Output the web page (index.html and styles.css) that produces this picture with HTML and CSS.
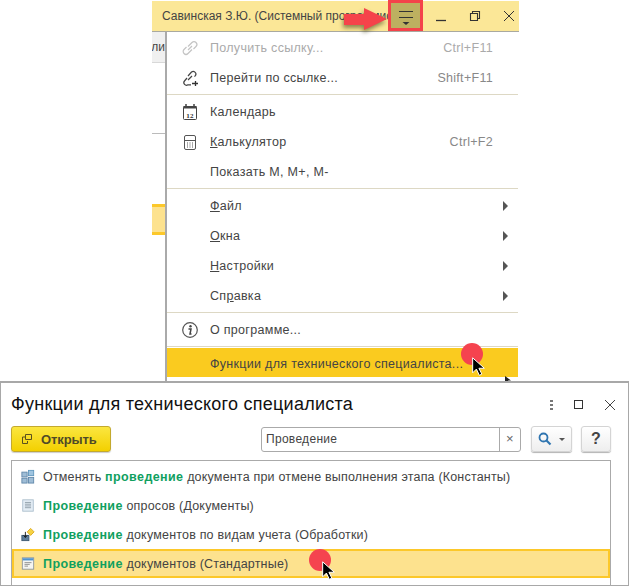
FILE: index.html
```html
<!DOCTYPE html>
<html lang="ru">
<head>
<meta charset="utf-8">
<title>Функции для технического специалиста</title>
<link rel="stylesheet" href="styles.css">
</head>
<body>
<div class="page">
  <section class="top">
    <div class="win">
      <header class="titlebar">
        <span class="user">Савинская З.Ю. (Системный программист)</span>
        <button class="menu-btn" aria-label="Меню">
          <svg width="28" height="24" viewBox="0 0 28 24"><path d="M7 7.500h14M7 13.500h14" stroke="#333" stroke-width="1.100" fill="none"/><path d="M10.500 18h7L14 21z" fill="#333"/></svg>
        </button>
        <span class="wbtn"><svg width="12" height="12" viewBox="0 0 12 12"><path d="M1 10.500h10" stroke="#333" stroke-width="1.300"/></svg></span>
        <span class="wbtn"><svg width="12" height="12" viewBox="0 0 12 12"><path d="M1.500 3.500h7v7h-7zM3.500 3.500v-2h7v7h-2" stroke="#333" stroke-width="1.100" fill="none"/></svg></span>
        <span class="wbtn"><svg width="12" height="12" viewBox="0 0 12 12"><path d="M1 1l10 10M11 1L1 11" stroke="#333" stroke-width="1"/></svg></span>
      </header>
      <div class="under">
        <div class="sl-tab"><span>али</span></div>
        <div class="sl-blank"></div>
        <div class="sl-yellow"></div>
      </div>
      <nav class="menu">
        <div class="mi disabled">
          <svg class="ic" width="18" height="18" viewBox="0 0 18 18"><path d="M7 7.500L11 3.500a2.800 2.800 0 0 1 4 4l-2.500 2.500M11 10.500l-4 4a2.800 2.800 0 0 1-4-4l2.500-2.500M7 11l4-4" stroke="#c4c4c4" stroke-width="1.200" fill="none"/></svg>
          <span class="lbl">Получить ссылку...</span><span class="key">Ctrl+F11</span>
        </div>
        <div class="mi">
          <svg class="ic" width="18" height="18" viewBox="0 0 18 18"><path d="M7 7L10.500 3a2.700 2.700 0 0 1 4 3.500l-1 1.200M6 9l-2.500 3a2.600 2.600 0 0 0 3.500 3.800h3M7 11l4-4" stroke="#444" stroke-width="1.200" fill="none"/><path d="M11 14.500h6M14.500 12v5" stroke="#333" stroke-width="1.300"/></svg>
          <span class="lbl">Перейти по ссылке...</span><span class="key">Shift+F11</span>
        </div>
        <div class="sep"></div>
        <div class="mi">
          <svg class="ic" width="18" height="18" viewBox="0 0 18 18"><rect x="2.500" y="3.500" width="13" height="13" rx="1" fill="#fff" stroke="#444"/><path d="M2.500 3h13v2.500h-13z" fill="#444"/><path d="M5 1v3M13 1v3" stroke="#444" stroke-width="1.500"/><text x="9" y="14.500" class="cal">12</text></svg>
          <span class="lbl">Календарь</span>
        </div>
        <div class="mi">
          <svg class="ic" width="18" height="18" viewBox="0 0 18 18"><rect x="3.500" y="2.500" width="11" height="14" rx="1.500" fill="#fff" stroke="#555"/><path d="M3.500 7.500h11" stroke="#555"/><path d="M6 10h1M8.500 10h1M11 10h1M6 12h1M8.500 12h1M11 12h1M6 14h1M8.500 14h1M11 14h1" stroke="#555"/></svg>
          <span class="lbl"><u>К</u>алькулятор</span><span class="key">Ctrl+F2</span>
        </div>
        <div class="mi"><span class="ic"></span><span class="lbl">Показать M, M+, M-</span></div>
        <div class="sep"></div>
        <div class="mi sub"><span class="ic"></span><span class="lbl"><u>Ф</u>айл</span><i class="tri"></i></div>
        <div class="mi sub"><span class="ic"></span><span class="lbl"><u>О</u>кна</span><i class="tri"></i></div>
        <div class="mi sub"><span class="ic"></span><span class="lbl"><u>Н</u>астройки</span><i class="tri"></i></div>
        <div class="mi sub"><span class="ic"></span><span class="lbl">Сп<u>р</u>авка</span><i class="tri"></i></div>
        <div class="sep"></div>
        <div class="mi">
          <svg class="ic" width="18" height="18" viewBox="0 0 18 18"><circle cx="9" cy="9" r="7.300" fill="#fff" stroke="#555" stroke-width="1.200"/><circle cx="9.500" cy="5.300" r="1.200" fill="#444"/><path d="M7.500 8h2.500l-1 5h1.500" stroke="#444" stroke-width="1.500" fill="none"/></svg>
          <span class="lbl">О программе...</span>
        </div>
        <div class="sep"></div>
        <div class="mi active"><span class="ic"></span><span class="lbl">Функции для технического специалиста...</span></div>
      </nav>
    </div>
    <svg class="arrow" width="46" height="26" viewBox="0 0 46 26"><path d="M0 6h20V0l23 11-23 11v-5H0z" fill="#f5434a"/></svg>
    <span class="dot dot-a"></span>
    <svg class="cursor cur-a" width="15" height="20" viewBox="0 0 18 24"><path d="M2 1v18l4.500-4.500 3.500 7.500 3-1.500-3.500-7H16z" fill="#000" stroke="#fff" stroke-width="1.200"/></svg>
    <svg class="cursor cur-small" width="9" height="8" viewBox="0 0 9 8"><path d="M1 0v7l2-2 2 3 1-1-2-2.500h3z" fill="#222"/></svg>
  </section>

  <section class="dialog">
    <header class="dlg-head">
      <h1>Функции для технического специалиста</h1>
      <div class="dlg-ctl">
        <span class="dots"><i></i><i></i><i></i></span>
        <span class="sq"></span>
        <svg width="12" height="12" viewBox="0 0 12 12"><path d="M1 1l10 10M11 1L1 11" stroke="#444" stroke-width="1"/></svg>
      </div>
    </header>
    <div class="toolbar">
      <button class="open">
        <svg width="10" height="10" viewBox="0 0 10 10"><path d="M3.500 .5h6v5h-6zM3 3H.5v6.500h5V7" stroke="#5a5020" fill="none"/></svg>
        <span>Открыть</span>
      </button>
      <div class="search">
        <span class="val">Проведение</span>
        <span class="clr">×</span>
      </div>
      <button class="tbtn find">
        <svg width="14" height="14" viewBox="0 0 14 14"><circle cx="5.500" cy="5.500" r="4" fill="none" stroke="#2f75b0" stroke-width="1.800"/><path d="M8.500 8.500l4 4" stroke="#2f75b0" stroke-width="2.200"/></svg>
        <i class="caret"></i>
      </button>
      <button class="tbtn help">?</button>
    </div>
    <div class="list">
      <div class="row">
        <svg width="14" height="15" viewBox="0 0 16 16"><rect x="1" y="3" width="6" height="5.500" fill="#9fbdd6" stroke="#5f86a8"/><rect x="8.500" y="1" width="6" height="6" fill="#9fc4e0" stroke="#5f97bd"/><rect x="1" y="10" width="6" height="5.500" fill="#9fbdd6" stroke="#5f86a8"/><rect x="8.500" y="9" width="6" height="6.500" fill="#9fbdd6" stroke="#5f86a8"/></svg>
        <span>Отменять <b>проведение</b> документа при отмене выполнения этапа (Константы)</span>
      </div>
      <div class="row">
        <svg width="14" height="15" viewBox="0 0 16 16"><rect x="2" y="1.500" width="12" height="13" fill="#e4edf5" stroke="#a9bccb"/><path d="M4.500 4.500h7M4.500 6.500h7M4.500 8.500h7M4.500 10.500h7" stroke="#8d9aa6"/></svg>
        <span><b>Проведение</b> опросов (Документы)</span>
      </div>
      <div class="row">
        <svg width="14" height="15" viewBox="0 0 16 16"><path d="M11 1l4 4-4 4-4-4z" fill="#f6d243" stroke="#d9a61c"/><rect x="1" y="9" width="8" height="6" fill="#5d7e9c" stroke="#3a556e"/><path d="M5 5v6M3 9l2 2.500L7 9" stroke="#111" fill="none"/></svg>
        <span><b>Проведение</b> документов по видам учета (Обработки)</span>
      </div>
      <div class="row current">
        <svg width="14" height="15" viewBox="0 0 16 16"><rect x="1.500" y="1.500" width="13" height="13" fill="#f5f5f2" stroke="#8a949c"/><path d="M2 2h12v2.500H2z" fill="#4e93d0"/><path d="M4 7h8M4 9h6M4 11h4" stroke="#888"/></svg>
        <span><b>Проведение</b> документов (Стандартные)</span>
      </div>
    </div>
    <span class="dot dot-b"></span>
    <svg class="cursor cur-b" width="15" height="20" viewBox="0 0 18 24"><path d="M2 1v18l4.500-4.500 3.500 7.500 3-1.500-3.500-7H16z" fill="#000" stroke="#fff" stroke-width="1.200"/></svg>
  </section>
</div>
</body>
</html>
```
FILE: styles.css
```css
* { box-sizing: border-box; }
html, body { margin: 0; padding: 0; background: #fff; }
body { font-family: "Liberation Sans", Arial, sans-serif; color: #444; overflow: hidden; }
.page { position: relative; width: 629px; height: 586px; overflow: hidden; }

.top { height: 381px; padding-left: 152px; padding-top: 1px; }
.win { position: relative; width: 367px; height: 380px; }
.titlebar { display: flex; align-items: center; height: 31px; background: #fbe797; padding-left: 10px; border-bottom: 1px solid #a9a9a0; }
.user { flex: none; width: 226px; font-size: 12px; color: #444; white-space: nowrap; }
.menu-btn { flex: none; width: 35px; height: 31px; margin-top: -1px; margin-right: 1px; padding: 0; background: #bdb060; border: 3px solid #f4434a; display: flex; align-items: center; justify-content: center; }
.wbtn { flex: none; width: 33px; display: flex; justify-content: center; }
.wbtn:nth-of-type(3) { width: 35px; }
.under { width: 13px; }
.sl-tab { display: flex; justify-content: flex-end; height: 31px; background: #f0f0f0; border-bottom: 1px solid #d8d8d8; font-size: 12px; line-height: 30px; overflow: hidden; white-space: nowrap; color: #444; }
.sl-tab span { flex: none; }
.sl-blank { height: 71px; border-bottom: 1px solid #bbb; }
.sl-yellow { height: 31px; margin-top: 70px; background: #fde28e; border-top: 3px solid #fcc82a; border-bottom: 3px solid #fcc82a; }

.menu { position: absolute; left: 13px; top: 31px; width: 353px; height: 350px; background: #fff; border-left: 2px solid #aaa; font-size: 12.500px; letter-spacing: .3px; }
.mi { display: flex; align-items: center; height: 30px; padding-left: 14px; padding-top: 2px; color: #444; white-space: nowrap; }
.mi .ic { width: 18px; height: 18px; flex: none; margin-right: 11px; }
.mi .lbl { flex: 1; }
.key { color: #888; padding-right: 25px; }
.disabled .lbl, .disabled .key { color: #aaa; }
.sep { height: 1px; margin: 2px 0 1px; background: #ddd8c4; }
.sep:last-of-type { margin-bottom: 2px; }
.tri { width: 0; height: 0; margin-right: 10px; border-left: 5px solid #555; border-top: 5px solid transparent; border-bottom: 5px solid transparent; }
.active { background: #facb1f; height: 29px; }
.cal { font: bold 7px "Liberation Serif", serif; text-anchor: middle; fill: #333; }

.arrow { position: absolute; left: 344px; top: 8px; filter: drop-shadow(-1px 3px 2px rgba(70, 70, 30, .6)); }
.dot { position: absolute; width: 22px; height: 22px; border-radius: 50%; background: #f5434f; }
.dot-a { left: 461px; top: 343px; }
.cursor { position: absolute; }
.cur-a { left: 471px; top: 357px; }
.cur-small { left: 504px; top: 376px; }

.dialog { position: relative; height: 205px; border: 2px solid #a8a8a8; border-left-width: 1px; border-bottom-width: 1px; border-right-width: 1px; background: #fff; }
.dlg-head { display: flex; align-items: center; justify-content: space-between; height: 43px; padding: 0 12px 0 10px; }
.dlg-head h1 { margin: 0; font-size: 18px; font-weight: 400; color: #111; letter-spacing: .26px; white-space: nowrap; }
.dlg-ctl { display: flex; align-items: center; gap: 21px; }
.dots { display: flex; flex-direction: column; gap: 2px; }
.dots i { width: 3px; height: 2px; background: #777; }
.sq { width: 9px; height: 9px; border: 1px solid #333; }
.toolbar { display: flex; align-items: center; height: 26px; padding-left: 10px; }
.open { display: flex; align-items: center; gap: 9px; width: 100px; height: 26px; padding: 0 0 0 10px; border: 1px solid #c3a92e; border-radius: 3px; background: linear-gradient(#fbe640, #f3d000); font: bold 13px "Liberation Sans", sans-serif; color: #4f4a28; letter-spacing: -.1px; box-shadow: 0 1px 1px rgba(0, 0, 0, .2); }
.search { display: flex; align-items: center; width: 260px; height: 25px; margin-left: 150px; border: 1px solid #aaa; border-radius: 3px; font-size: 12px; letter-spacing: .3px; color: #444; }
.val { flex: 1; padding-left: 4px; }
.clr { width: 21px; height: 23px; border-left: 1px solid #aaa; text-align: center; line-height: 22px; color: #666; font-size: 13px; }
.tbtn { display: flex; align-items: center; justify-content: center; height: 26px; padding: 0; border: 1px solid #d4d4d4; border-radius: 3px; background: linear-gradient(#fff, #eeeeee); box-shadow: 0 1px 1px rgba(0, 0, 0, .3); }
.find { width: 41px; gap: 7px; margin-left: 10px; }
.caret { width: 0; height: 0; border-top: 3px solid #555; border-left: 3px solid transparent; border-right: 3px solid transparent; }
.help { width: 30px; margin-left: 9px; font: bold 16px "Liberation Sans", sans-serif; color: #444; }
.list { width: 600px; height: 130px; margin: 8px 0 0 10px; border: 1px solid #aaa; border-bottom: 0; padding-top: 1px; }
.row { display: flex; align-items: center; gap: 8px; height: 29px; padding-left: 9px; font-size: 12.500px; letter-spacing: .19px; color: #444; white-space: nowrap; }
.row b { color: #10a05f; letter-spacing: .4px; }
.current { background: #fde28e; border: 2px solid #fcc82a; padding-left: 7px; }
.dot-b { left: 308px; top: 166px; }
.cur-b { left: 320px; top: 178px; }
```
